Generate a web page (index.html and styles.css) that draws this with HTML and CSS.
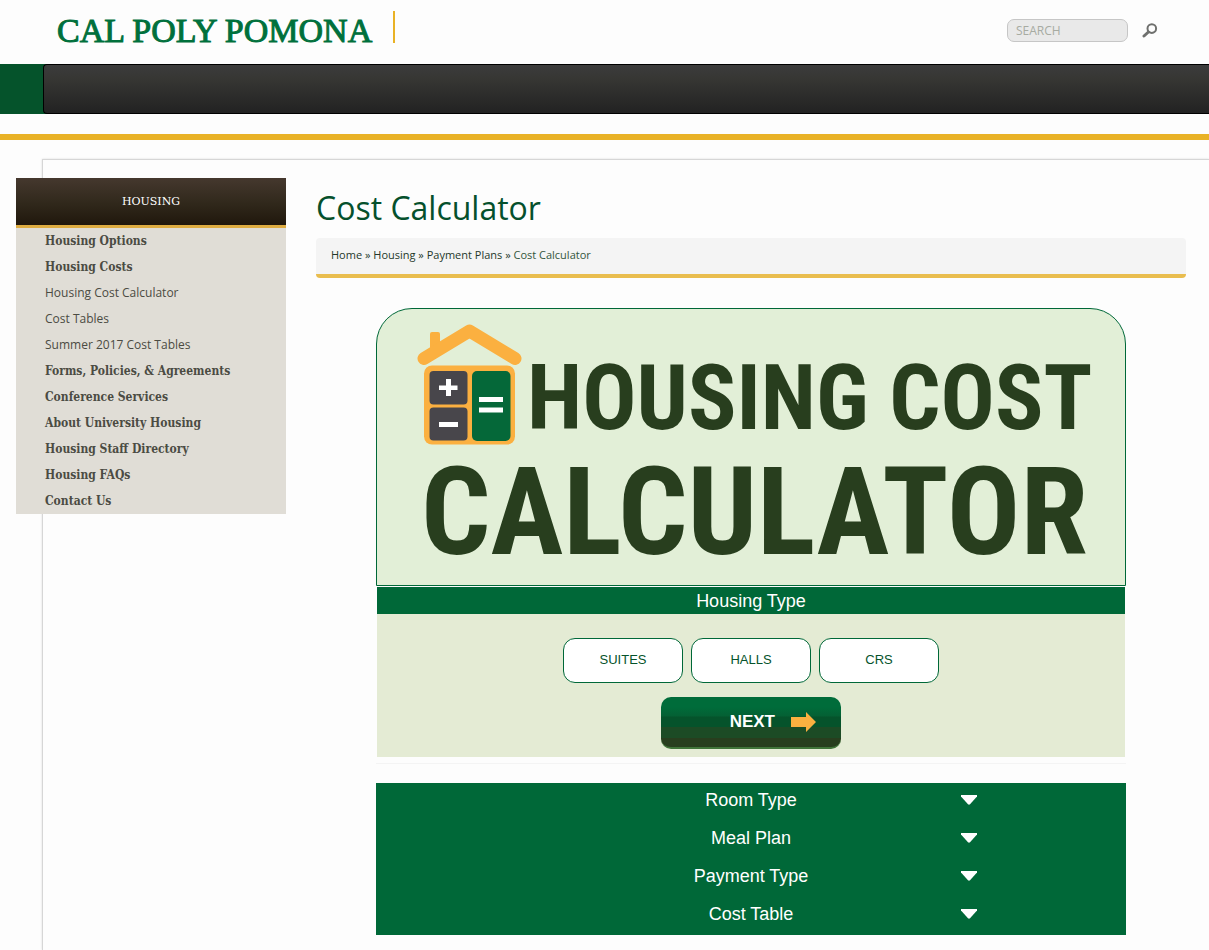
FILE: index.html
```html
<!DOCTYPE html>
<html lang="en">
<head>
<meta charset="utf-8">
<meta name="viewport" content="width=device-width, initial-scale=1">
<title>Cost Calculator</title>
<link rel="stylesheet" href="styles.css">
</head>
<body>
<header class="site-header">
  <a class="logo" href="#">CAL POLY POMONA</a>
  <form class="search">
    <input class="search-input" type="text" placeholder="SEARCH" aria-label="Search">
    <button class="search-button" type="button" aria-label="Search">
      <svg width="16" height="16" viewBox="0 0 16 16" fill="none" stroke="#6f706e"><circle cx="9.8" cy="5.6" r="4.3" stroke-width="2"/><path d="M6.4 9 2 13" stroke-width="3" stroke-linecap="round"/></svg>
    </button>
  </form>
</header>
<nav class="main-nav" aria-label="Main"><div class="main-nav-bar"></div></nav>
<div class="gold-rule"></div>
<div class="page-frame">
  <aside class="sidebar">
    <h2 class="sidebar-title">HOUSING</h2>
    <ul class="side-menu">
      <li><a href="#">Housing Options</a></li>
      <li><a href="#">Housing Costs</a></li>
      <li class="sub"><a href="#">Housing Cost Calculator</a></li>
      <li class="sub"><a href="#">Cost Tables</a></li>
      <li class="sub"><a href="#">Summer 2017 Cost Tables</a></li>
      <li><a href="#">Forms, Policies, &amp; Agreements</a></li>
      <li><a href="#">Conference Services</a></li>
      <li><a href="#">About University Housing</a></li>
      <li><a href="#">Housing Staff Directory</a></li>
      <li><a href="#">Housing FAQs</a></li>
      <li><a href="#">Contact Us</a></li>
    </ul>
  </aside>
  <main class="content">
    <h1 class="page-title">Cost Calculator</h1>
    <nav class="breadcrumb" aria-label="Breadcrumb"><a href="#">Home</a> » <a href="#">Housing</a> » <a href="#">Payment Plans</a> » <a class="current" href="#">Cost Calculator</a></nav>
    <section class="calculator">
      <div class="banner">
        <div class="banner-top">
          <svg class="house" width="106" height="122" viewBox="417 323 106 122">
            <rect x="430" y="332" width="10" height="24" rx="2" fill="#fbb040"/>
            <path d="M424 358.500 469.500 331 515 358.500" fill="none" stroke="#fbb040" stroke-width="13" stroke-linecap="round" stroke-linejoin="round"/>
            <rect x="424" y="365.500" width="91" height="79" rx="8" fill="#fbb040"/>
            <g fill="#48464b"><rect x="429.500" y="371" width="38" height="33.500" rx="4"/><rect x="429.500" y="407.500" width="38" height="33" rx="4"/></g>
            <rect x="472" y="371" width="38.500" height="70" rx="5" fill="#056839"/>
            <g fill="#fff"><rect x="439" y="385.500" width="18.500" height="4.500"/><rect x="446" y="379" width="5" height="17"/><rect x="439" y="422" width="19" height="5"/><rect x="479" y="397" width="24" height="5"/><rect x="479" y="407.500" width="24" height="5"/></g>
          </svg>
          <span class="banner-line">HOUSING COST</span>
        </div>
        <div class="banner-line banner-line-large">CALCULATOR</div>
      </div>
      <h2 class="step-title">Housing Type</h2>
      <div class="step-panel">
        <div class="choices">
          <button class="choice" type="button">SUITES</button>
          <button class="choice" type="button">HALLS</button>
          <button class="choice" type="button">CRS</button>
        </div>
        <button class="next" type="button">NEXT
          <svg width="25" height="20" viewBox="0 0 25 20"><path d="M0 5h15V0l10 10-10 10v-5H0z" fill="#fbb040"/></svg>
        </button>
      </div>
      <div class="panel-edge"></div>
      <div class="steps">
        <button class="step" type="button"><span>Room Type</span><svg width="16" height="10" viewBox="0 0 16 10"><path d="M0 0h16v1.500L9 9.300Q8 10 7 9.300L0 1.500z" fill="#fff"/></svg></button>
        <button class="step" type="button"><span>Meal Plan</span><svg width="16" height="10" viewBox="0 0 16 10"><path d="M0 0h16v1.500L9 9.300Q8 10 7 9.300L0 1.500z" fill="#fff"/></svg></button>
        <button class="step" type="button"><span>Payment Type</span><svg width="16" height="10" viewBox="0 0 16 10"><path d="M0 0h16v1.500L9 9.300Q8 10 7 9.300L0 1.500z" fill="#fff"/></svg></button>
        <button class="step" type="button"><span>Cost Table</span><svg width="16" height="10" viewBox="0 0 16 10"><path d="M0 0h16v1.500L9 9.300Q8 10 7 9.300L0 1.500z" fill="#fff"/></svg></button>
      </div>
    </section>
  </main>
</div>
</body>
</html>
```
FILE: styles.css
```css
* { box-sizing: border-box; }
body {
  display: flex;
  flex-direction: column;
  min-height: 100vh;
  margin: 0;
  background: #fdfdfd;
  color: #05502c;
  font-family: "Open Sans", sans-serif;
}
a { color: inherit; text-decoration: none; }
button { font-family: "Liberation Sans", Arial, sans-serif; cursor: pointer; }

.site-header {
  display: flex;
  justify-content: space-between;
  align-items: flex-start;
  height: 64px;
  padding: 11px 51px 0 57px;
}
.logo {
  padding-right: 21px;
  border-right: 2px solid #e9b226;
  color: #00703c;
  font-family: "Liberation Serif", serif;
  font-size: 34px;
  line-height: 32px;
  padding-top: 4px;
  height: 32px;
  -webkit-text-stroke: 1px #00703c;
}
.search { display: flex; align-items: center; gap: 14px; padding-top: 8px; }
.search-input {
  width: 121px;
  height: 23px;
  padding: 0 8px;
  border: 1px solid #c6c6c6;
  border-radius: 7px;
  background: #e9e9e9;
  font: 12px "Open Sans", sans-serif;
}
.search-input::placeholder { color: #a7aba2; opacity: 1; }
.search-button { display: flex; padding: 0; border: 0; background: none; }

.main-nav { height: 50px; padding-left: 43px; background: #05532b; }
.main-nav-bar {
  height: 50px;
  border: 1px solid #000;
  border-right: 0;
  border-radius: 4px 0 0 4px;
  background: linear-gradient(#3c3c3c, #363633 30%, #222);
}
.gold-rule { height: 6px; margin: 20px 0 19px; background: #e9b226; }

.page-frame {
  flex: 1;
  display: flex;
  align-items: flex-start;
  gap: 30px;
  margin-left: 42px;
  padding: 18px 23px 14px 0;
  border-top: 1px solid #d6d6d6;
  border-left: 1px solid #d6d6d6;
  box-shadow: 0 0 2px #ddd;
}
.sidebar { flex: 0 0 270px; margin-left: -27px; background: #e0ddd6; }
.sidebar-title {
  margin: 0;
  border-bottom: 3px solid #deac41;
  background: linear-gradient(#45382e, #30281b 55%, #20170c);
  color: #fff;
  font: 11px/47px "DejaVu Serif", serif;
  text-align: center;
}
.side-menu {
  margin: 0;
  padding: 0 0 0 29px;
  list-style: none;
  color: #4b4b43;
  font: bold 12px/26px "DejaVu Serif Condensed", "DejaVu Serif", serif;
}
.side-menu .sub { font: 12px/26px "Open Sans", sans-serif; }

.content { flex: 1; min-width: 0; }
.page-title { margin: 8px 0; font-size: 32px; font-weight: 400; line-height: 44px; }
.breadcrumb {
  height: 40px;
  padding: 0 15px;
  border-bottom: 4px solid #e9bd4e;
  border-radius: 4px;
  background: #f4f4f4;
  color: #24382a;
  font-size: 11px;
  line-height: 34px;
}
.current { color: #33563c; }

.calculator {
  max-width: 750px;
  margin: 30px auto 0;
  font-family: "Liberation Sans", Arial, sans-serif;
}
.banner {
  height: 278px;
  padding: 15px 36px 0 40px;
  overflow: hidden;
  border: 1px solid #006838;
  border-radius: 36px 36px 0 0;
  background: #e2efd7;
}
.banner-top { display: flex; align-items: flex-end; gap: 4px; height: 121px; }
.house { flex: none; }
.banner-line {
  color: #283e1e;
  font-family: "Roboto Condensed", Roboto, sans-serif;
  font-size: 90px;
  font-weight: 700;
  line-height: 92px;
  white-space: nowrap;
}
.banner-line-large { padding-left: 4px; font-size: 122px; line-height: 136px; }
.step-title {
  margin: 1px 1px 0;
  padding-top: 2px;
  background: #006838;
  color: #fff;
  font-size: 18px;
  font-weight: 400;
  line-height: 25px;
  text-align: center;
}
.step-panel {
  display: flex;
  flex-direction: column;
  align-items: center;
  gap: 14px;
  margin: 0 1px;
  padding: 24px 0 8px;
  background: #e4ebd4;
}
.choices { display: flex; gap: 8px; }
.choice {
  width: 120px;
  height: 45px;
  padding: 0 0 2px;
  border: 1px solid #006838;
  border-radius: 12px;
  background: #fff;
  color: #05532b;
  font-size: 13px;
}
.next {
  display: flex;
  align-items: center;
  justify-content: flex-end;
  gap: 16px;
  width: 180px;
  height: 52px;
  padding: 0 25px 0 0;
  border: 0;
  border-bottom: 2px solid #417439;
  border-radius: 10px;
  background: linear-gradient(#006c3a 0 20%, #046034 38%, #05532b 40% 60%, #1c4b25 60% 82%, #283e1e 82%);
  color: #fff;
  font-size: 17px;
  font-weight: 700;
}
.panel-edge { height: 7px; border-bottom: 1px solid #f4f4f4; }
.steps { margin-top: 19px; background: #006838; }
.step {
  display: grid;
  grid-template-columns: 1fr 56% 1fr;
  align-items: center;
  width: 100%;
  height: 38px;
  padding: 0 0 4px;
  border: 0;
  background: none;
  color: #fff;
  font-size: 18px;
}
.step span { grid-column: 2; }
```
